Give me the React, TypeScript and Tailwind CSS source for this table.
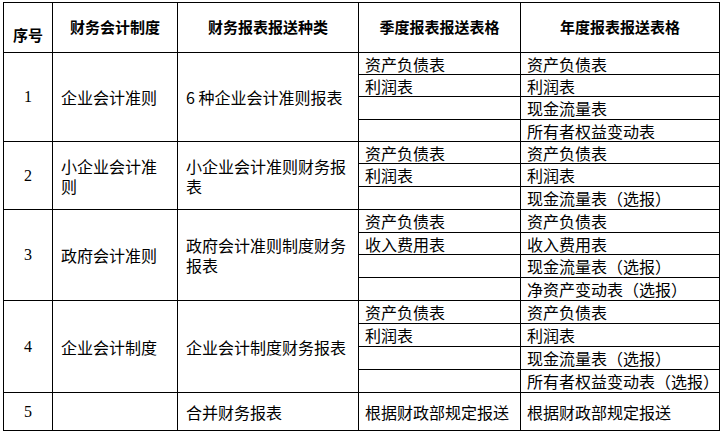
const rows = [
  {
    no: "1",
    system: "企业会计准则",
    kind: "6 种企业会计准则报表",
    quarter: ["资产负债表", "利润表", "", ""],
    year: ["资产负债表", "利润表", "现金流量表", "所有者权益变动表"],
  },
  {
    no: "2",
    system: "小企业会计准则",
    kind: "小企业会计准则财务报表",
    quarter: ["资产负债表", "利润表", ""],
    year: ["资产负债表", "利润表", "现金流量表（选报）"],
  },
  {
    no: "3",
    system: "政府会计准则",
    kind: "政府会计准则制度财务报表",
    quarter: ["资产负债表", "收入费用表", "", ""],
    year: ["资产负债表", "收入费用表", "现金流量表（选报）", "净资产变动表（选报）"],
  },
  {
    no: "4",
    system: "企业会计制度",
    kind: "企业会计制度财务报表",
    quarter: ["资产负债表", "利润表", "", ""],
    year: ["资产负债表", "利润表", "现金流量表（选报）", "所有者权益变动表（选报）"],
  },
]

const span = ["", "", "", "row-span-3", "row-span-4"]

export default function App() {
  return (
    <div
      className="w-[723px] h-[433px] bg-white text-black pt-[2px] pl-[3px]"
      style={{ fontFamily: '"Noto Sans CJK SC", sans-serif' }}
    >
      <div className="grid grid-cols-[49px_125px_181px_162px_199px] grid-rows-[50px_22px_22px_23px_22px_22px_23px_23px_23px_22px_23px_23px_23px_23px_23px_23px_38px] w-fit border-l border-t border-black text-[16px]">
        {/* 表头 */}
        <div className="flex items-end justify-center pb-[6px] border-r border-b border-black font-bold text-[15px]">序号</div>
        <div className="flex items-center justify-center border-r border-b border-black font-bold text-[15px]">财务会计制度</div>
        <div className="flex items-center justify-center border-r border-b border-black font-bold text-[15px]">财务报表报送种类</div>
        <div className="flex items-center justify-center border-r border-b border-black font-bold text-[15px]">季度报表报送表格</div>
        <div className="flex items-center justify-center border-r border-b border-black font-bold text-[15px]">年度报表报送表格</div>

        {rows.map(r => {
          const n = r.year.length
          return [
            <div key={r.no + "a"} className={`${span[n]} flex items-center justify-center border-r border-b border-black`} style={{ fontFamily: '"Liberation Serif", serif' }}>{r.no}</div>,
            <div key={r.no + "b"} className={`${span[n]} flex items-center pl-2 border-r border-b border-black`}>
              <p className="w-[100px] leading-[20px]">{r.system}</p>
            </div>,
            <div key={r.no + "c"} className={`${span[n]} flex items-center pl-2 border-r border-b border-black`}>
              <p className="w-[165px] leading-[20px]">{r.kind}</p>
            </div>,
            ...r.year.flatMap((y, i) => [
              <div key={r.no + "q" + i} className="flex items-center pl-[6px] border-r border-b border-black leading-none whitespace-nowrap">{r.quarter[i]}</div>,
              <div key={r.no + "y" + i} className="flex items-center pl-[6px] border-r border-b border-black leading-none whitespace-nowrap">{y}</div>,
            ]),
          ]
        })}

        {/* 合并 */}
        <div className="flex items-center justify-center border-r border-b border-black" style={{ fontFamily: '"Liberation Serif", serif' }}>5</div>
        <div className="border-r border-b border-black"></div>
        <div className="flex items-center pl-2 border-r border-b border-black">合并财务报表</div>
        <div className="flex items-center pl-[6px] border-r border-b border-black whitespace-nowrap">根据财政部规定报送</div>
        <div className="flex items-center pl-[6px] border-r border-b border-black whitespace-nowrap">根据财政部规定报送</div>
      </div>
    </div>
  )
}
